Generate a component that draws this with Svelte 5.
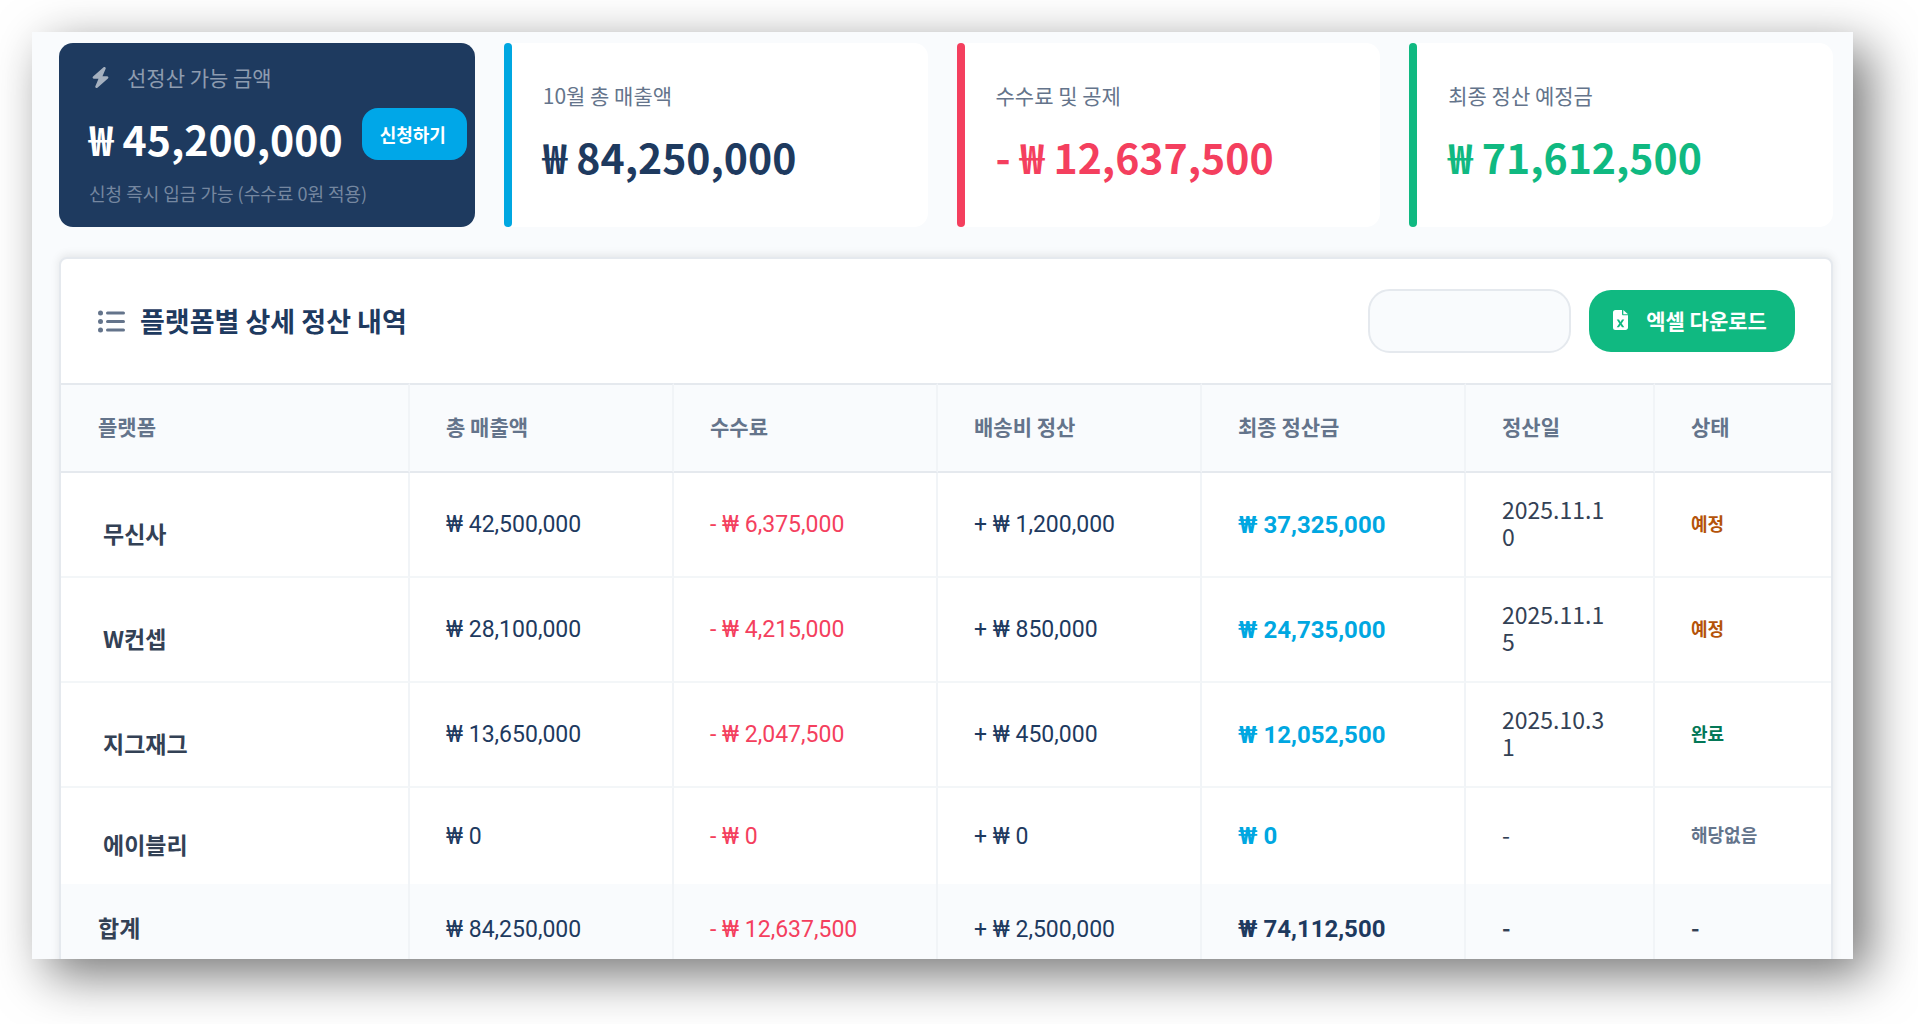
<script>

  let period = $state('');

  const stats = [
    { label: '10월 총 매출액', value: '₩ 84,250,000', tone: 'sales' },
    { label: '수수료 및 공제', value: '- ₩ 12,637,500', tone: 'fee' },
    { label: '최종 정산 예정금', value: '₩ 71,612,500', tone: 'final' }
  ];

  const columns = ['플랫폼', '총 매출액', '수수료', '배송비 정산', '최종 정산금', '정산일', '상태'];

  const rows = [
    { name: '무신사', sales: '₩ 42,500,000', fee: '- ₩ 6,375,000', shipping: '+ ₩ 1,200,000', total: '₩ 37,325,000', date: '2025.11.10', status: '예정', tone: 'pending' },
    { name: 'W컨셉', sales: '₩ 28,100,000', fee: '- ₩ 4,215,000', shipping: '+ ₩ 850,000', total: '₩ 24,735,000', date: '2025.11.15', status: '예정', tone: 'pending' },
    { name: '지그재그', sales: '₩ 13,650,000', fee: '- ₩ 2,047,500', shipping: '+ ₩ 450,000', total: '₩ 12,052,500', date: '2025.10.31', status: '완료', tone: 'done' },
    { name: '에이블리', sales: '₩ 0', fee: '- ₩ 0', shipping: '+ ₩ 0', total: '₩ 0', date: '-', status: '해당없음', tone: 'none' }
  ];

</script>

<main class="panel">
  <section class="stats">
    <article class="advance">
      <p class="advance-label">
        <svg viewBox="32 0 384 512" width="17" height="21" aria-hidden="true">
          <path d="M349.4 44.6c5.9-13.7 1.5-29.7-10.6-38.500s-28.600-8-39.900 1.800l-256 224c-10 8.800-13.600 22.900-8.900 35.300S50.700 288 64 288H175.500L98.600 467.400c-5.900 13.700-1.500 29.700 10.600 38.500s28.600 8 39.900-1.800l256-224c10-8.800 13.600-22.900 8.900-35.300s-16.600-20.700-30-20.700H272.500L349.400 44.600z" />
        </svg>
        선정산 가능 금액
      </p>
      <div class="advance-row">
        <strong class="amount">₩ 45,200,000</strong>
        <button class="apply" type="button">신청하기</button>
      </div>
      <p class="advance-note">신청 즉시 입금 가능 (수수료 0원 적용)</p>
    </article>
    {#each stats as stat}
      <article class="stat {stat.tone}">
        <div class="stat-body">
          <p class="stat-label">{stat.label}</p>
          <strong class="amount">{stat.value}</strong>
        </div>
      </article>
    {/each}
  </section>

  <section class="detail">
    <header class="detail-head">
      <h2>
        <svg viewBox="0 0 27 23" width="27" height="23" aria-hidden="true">
          <circle cx="2.500" cy="3" r="2.500" />
          <circle cx="2.500" cy="11.500" r="2.500" />
          <circle cx="2.500" cy="20" r="2.500" />
          <rect x="8" y="1.500" width="19" height="3" rx="1.500" />
          <rect x="8" y="10" width="19" height="3" rx="1.500" />
          <rect x="8" y="18.500" width="19" height="3" rx="1.500" />
        </svg>
        플랫폼별 상세 정산 내역
      </h2>
      <input class="period" type="text" aria-label="정산 기간" bind:value={period} />
      <button class="excel" type="button">
        <svg viewBox="0 0 15 20" width="15" height="20" aria-hidden="true">
          <path fill-rule="evenodd" d="M2.500 0H9v4c0 .8.500 1.300 1.300 1.300H15v12.200c0 1.400-1.100 2.500-2.500 2.500h-10A2.500 2.500 0 0 1 0 17.500v-15A2.500 2.500 0 0 1 2.500 0zM6 9.500H3.700l2.600 3.900-2.600 3.900H6l1.500-2.400L9 17.300h2.300l-2.600-3.900 2.600-3.900H9l-1.500 2.400z" />
          <path d="M10.300 0 15 4.200h-4.700z" />
        </svg>
        엑셀 다운로드
      </button>
    </header>

    <table>
      <colgroup>
        <col class="c-name" />
        <col class="c-money" />
        <col class="c-money" />
        <col class="c-money" />
        <col class="c-money" />
        <col class="c-date" />
        <col class="c-status" />
      </colgroup>
      <thead>
        <tr>
          {#each columns as column}
            <th scope="col">{column}</th>
          {/each}
        </tr>
      </thead>
      <tbody>
        {#each rows as row}
          <tr>
            <th class="name" scope="row">{row.name}</th>
            <td class="money">{row.sales}</td>
            <td class="money minus">{row.fee}</td>
            <td class="money">{row.shipping}</td>
            <td class="money total">{row.total}</td>
            <td class="date">{row.date}</td>
            <td class="status {row.tone}">{row.status}</td>
          </tr>
        {/each}
      </tbody>
      <tfoot>
        <tr>
          <th class="sum" scope="row">합계</th>
          <td class="money">₩ 84,250,000</td>
          <td class="money minus">- ₩ 12,637,500</td>
          <td class="money">+ ₩ 2,500,000</td>
          <td class="money sum-total">₩ 74,112,500</td>
          <td class="sum">-</td>
          <td class="sum">-</td>
        </tr>
      </tfoot>
    </table>
  </section>
</main>

<style>

:global(body) {
  margin: 0;
  background: #fff;
}

* {
  box-sizing: border-box;
}

.panel {
  height: calc(100vh - 97px);
  margin: 32px 65px 65px 32px;
  padding: 11px 20px 0 27px;
  overflow: hidden;
  background: #f9fbfd;
  box-shadow: 16px 16px 48px rgba(0, 0, 0, .54);
  color: #334155;
  font-family: "Noto Sans CJK KR", sans-serif;
}

p, h2 {
  margin: 0;
}

button, input {
  font-family: inherit;
}

.stats {
  display: grid;
  grid-template-columns: 416fr 424fr 424fr 424fr;
  gap: 29px;
  height: 184px;
}

.advance {
  padding: 19px 8px 0 30px;
  border-radius: 14px;
  background: #1e3a5f;
}

.advance-label {
  display: flex;
  align-items: center;
  gap: 18px;
  color: #8e9caf;
  font-size: 21px;
  line-height: 30px;
}

.advance-label svg {
  margin-left: 3px;
  fill: #a5b0bf;
}

.advance-row {
  display: flex;
  justify-content: space-between;
  align-items: flex-start;
  margin-top: 16px;
  color: #fff;
}

.amount {
  font-size: 41px;
  line-height: 60px;
  font-weight: 700;
  white-space: nowrap;
}

.apply {
  width: 105px;
  height: 52px;
  padding: 0 3px 0 0;
  border: 0;
  border-radius: 16px;
  background: #00a7e8;
  color: #fff;
  font-size: 18px;
  font-weight: 700;
}

.advance-note {
  margin-top: 10px;
  color: #7587a0;
  font-size: 18px;
  line-height: 30px;
}

.stat {
  display: flex;
  border-radius: 5px 14px 14px 5px;
  background: #fff;
}

.stat::before {
  content: "";
  width: 8px;
  border-radius: 4px;
  background: currentColor;
}

.stat-body {
  padding: 37px 0 0 31px;
}

.stat-label {
  margin-bottom: 16px;
  color: #64748b;
  font-size: 21px;
  line-height: 30px;
}

.sales::before {
  background: #00a7e1;
}

.sales {
  color: #1e3a5f;
}

.fee {
  color: #f43f5e;
}

.final {
  color: #10b981;
}

.detail {
  margin-top: 30px;
  border: 2px solid #e5e9ee;
  border-radius: 8px;
  background: #fff;
  box-shadow: 0 -2px 10px rgba(0, 0, 0, .09);
}

.detail-head {
  display: flex;
  align-items: center;
  gap: 18px;
  height: 124px;
  padding: 0 36px 0 37px;
}

h2 {
  display: flex;
  align-items: center;
  gap: 15px;
  margin-right: auto;
  color: #1e3a5f;
  font-size: 27px;
  line-height: 40px;
}

h2 svg {
  fill: #64748b;
}

.period {
  width: 203px;
  height: 64px;
  padding: 0 20px;
  border: 2px solid #e5e9ee;
  border-radius: 22px;
  background: #f9fbfd;
  color: #334155;
  font-size: 20px;
}

.excel {
  display: flex;
  align-items: center;
  justify-content: center;
  gap: 18px;
  width: 206px;
  height: 62px;
  padding: 0 4px 2px 0;
  border: 0;
  border-radius: 22px;
  background: #10b981;
  color: #fff;
  font-size: 21px;
  font-weight: 700;
}

.excel svg {
  fill: #fff;
}

table {
  width: 100%;
  border-collapse: separate;
  border-spacing: 0;
  table-layout: fixed;
}

.c-name {
  width: auto;
}

.c-money {
  width: 264px;
}

.c-date {
  width: 189px;
}

.c-status {
  width: 176px;
}

th, td {
  padding: 0 37px 0 36px;
  border-right: 2px solid #f1f4f7;
  border-bottom: 2px solid #f3f6f8;
  text-align: left;
  vertical-align: middle;
}

th:first-child {
  padding-left: 37px;
}

th:last-child, td:last-child {
  border-right: 0;
}

thead th {
  height: 90px;
  padding-bottom: 4px;
  border-top: 2px solid #e5e9ee;
  border-bottom-color: #e5e9ee;
  background: #f9fbfd;
  color: #64748b;
  font-size: 21px;
  font-weight: 700;
}

tbody th, tbody td {
  height: 105px;
}

tbody tr:last-child > * {
  height: 96px;
  border-bottom: 0;
}

tbody .name {
  padding: 16px 0 0 42px;
  font-size: 23px;
}

.money {
  color: #1e3a5f;
  font-family: Roboto, "Noto Sans CJK KR", sans-serif;
  font-size: 23px;
  white-space: nowrap;
}

.minus {
  color: #f43f5e;
}

.total {
  color: #00a7e1;
  font-size: 24px;
  font-weight: 700;
}

.date {
  padding-right: 44px;
  padding-bottom: 4px;
  font-size: 23px;
  line-height: 27px;
  word-break: break-all;
}

.status {
  padding-bottom: 4px;
  font-size: 18px;
  font-weight: 700;
}

.pending {
  color: #b45309;
}

.done {
  color: #047857;
}

.none {
  color: #64748b;
}

tfoot th, tfoot td {
  height: 92px;
  background: #f9fbfd;
}

.sum {
  padding-bottom: 4px;
  font-size: 23px;
  font-weight: 700;
}

.sum-total {
  font-size: 24px;
  font-weight: 700;
}

</style>
